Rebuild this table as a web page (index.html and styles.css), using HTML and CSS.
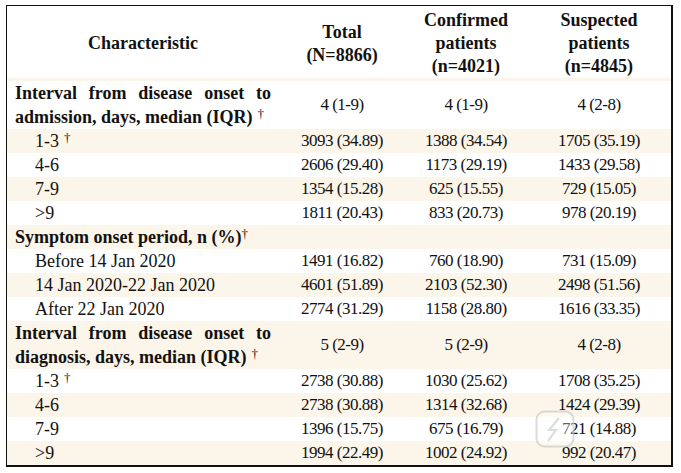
FILE: index.html
```html
<!DOCTYPE html>
<html>
<head>
<meta charset="utf-8">
<link rel="stylesheet" href="styles.css">
</head>
<body>
<div class="page">
  <div class="frame">
    <table class="tbl">
      <colgroup>
        <col class="c1"><col class="c2"><col class="c3"><col class="c4">
      </colgroup>
      <thead>
        <tr class="head">
          <th class="hcell">Characteristic</th>
          <th class="hcell">Total<br>(N=8866)</th>
          <th class="hcell">Confirmed<br>patients<br>(n=4021)</th>
          <th class="hcell">Suspected<br>patients<br>(n=4845)</th>
        </tr>
      </thead>
      <tbody>
        <tr class="double">
          <td class="lbl bold just"><span>Interval from disease onset to</span> <span>admission, days, median (IQR)</span><span class="dag sp">†</span></td>
          <td class="num">4 (1-9)</td><td class="num">4 (1-9)</td><td class="num">4 (2-8)</td>
        </tr>
        <tr class="alt">
          <td class="lbl sub">1-3<span class="dag sp">†</span></td>
          <td class="num">3093 (34.89)</td><td class="num">1388 (34.54)</td><td class="num">1705 (35.19)</td>
        </tr>
        <tr>
          <td class="lbl sub">4-6</td>
          <td class="num">2606 (29.40)</td><td class="num">1173 (29.19)</td><td class="num">1433 (29.58)</td>
        </tr>
        <tr class="alt">
          <td class="lbl sub">7-9</td>
          <td class="num">1354 (15.28)</td><td class="num">625 (15.55)</td><td class="num">729 (15.05)</td>
        </tr>
        <tr>
          <td class="lbl sub">&gt;9</td>
          <td class="num">1811 (20.43)</td><td class="num">833 (20.73)</td><td class="num">978 (20.19)</td>
        </tr>
        <tr class="alt">
          <td class="lbl bold">Symptom onset period, n (%)<span class="dag">†</span></td>
          <td class="num"></td><td class="num"></td><td class="num"></td>
        </tr>
        <tr>
          <td class="lbl sub">Before 14 Jan 2020</td>
          <td class="num">1491 (16.82)</td><td class="num">760 (18.90)</td><td class="num">731 (15.09)</td>
        </tr>
        <tr class="alt">
          <td class="lbl sub">14 Jan 2020-22 Jan 2020</td>
          <td class="num">4601 (51.89)</td><td class="num">2103 (52.30)</td><td class="num">2498 (51.56)</td>
        </tr>
        <tr>
          <td class="lbl sub">After 22 Jan 2020</td>
          <td class="num">2774 (31.29)</td><td class="num">1158 (28.80)</td><td class="num">1616 (33.35)</td>
        </tr>
        <tr class="alt double">
          <td class="lbl bold just"><span>Interval from disease onset to</span> <span>diagnosis, days, median (IQR)</span><span class="dag sp">†</span></td>
          <td class="num">5 (2-9)</td><td class="num">5 (2-9)</td><td class="num">4 (2-8)</td>
        </tr>
        <tr>
          <td class="lbl sub">1-3<span class="dag sp">†</span></td>
          <td class="num">2738 (30.88)</td><td class="num">1030 (25.62)</td><td class="num">1708 (35.25)</td>
        </tr>
        <tr class="alt">
          <td class="lbl sub">4-6</td>
          <td class="num">2738 (30.88)</td><td class="num">1314 (32.68)</td><td class="num">1424 (29.39)</td>
        </tr>
        <tr>
          <td class="lbl sub">7-9</td>
          <td class="num">1396 (15.75)</td><td class="num">675 (16.79)</td><td class="num">721 (14.88)</td>
        </tr>
        <tr class="alt">
          <td class="lbl sub">&gt;9</td>
          <td class="num">1994 (22.49)</td><td class="num">1002 (24.92)</td><td class="num">992 (20.47)</td>
        </tr>
      </tbody>
    </table>
    <svg class="mark" width="40" height="38" viewBox="0 0 40 38" aria-hidden="true">
      <rect x="1.5" y="1.5" width="37" height="35" rx="8" fill="rgba(255,255,255,0.35)" stroke="rgba(190,190,190,0.55)" stroke-width="2"/>
      <path d="M24 8 L14 20 L21 20 L13 31" fill="none" stroke="rgba(190,190,190,0.55)" stroke-width="2"/>
    </svg>
  </div>
</div>
</body>
</html>
```

FILE: styles.css
```css
html, body {
  margin: 0;
  padding: 0;
  background: #ffffff;
}

.page {
  width: 681px;
  height: 473px;
  padding: 5px 0 0 6px;
  box-sizing: border-box;
}

.frame {
  position: relative;
  width: 667px;
}

.tbl {
  border-collapse: separate;
  border-spacing: 0;
  table-layout: fixed;
  width: 667px;
  border-top: 1px solid #111;
  border-left: 1px solid #111;
  border-right: 2px solid #111;
  border-bottom: 2px solid #111;
  font-family: "Liberation Serif", "Times New Roman", serif;
  color: #111;
}

.c1 { width: 272px; }
.c2 { width: 126px; }
.c3 { width: 122px; }
.c4 { width: 144px; }

.hcell {
  height: 69px;
  padding: 3px 4px 0;
  font-size: 18px;
  font-weight: bold;
  line-height: 23px;
  text-align: center;
  vertical-align: middle;
  border-bottom: 3px solid #fcf5e9;
}

tbody tr td {
  height: 24px;
  padding: 0;
  vertical-align: middle;
}

tbody tr.double td {
  height: 48px;
}

tr.alt td {
  background: #fcf5e9;
}

.lbl {
  font-size: 18px;
  line-height: 24px;
  padding: 0 8px 0 8px;
  text-align: left;
}

.lbl.sub {
  padding-left: 28px;
}

.bold {
  font-weight: bold;
}

.just {
  text-align: justify;
}

.num {
  font-size: 17px;
  letter-spacing: -0.5px;
  line-height: 24px;
  text-align: center;
}

.dag {
  display: inline-block;
  font-size: 13px;
  font-weight: normal;
  line-height: 13px;
  vertical-align: 5px;
  color: #111;
}

.dag.sp {
  margin-left: 5px;
}

.mark {
  position: absolute;
  left: 529px;
  top: 405px;
}
```
